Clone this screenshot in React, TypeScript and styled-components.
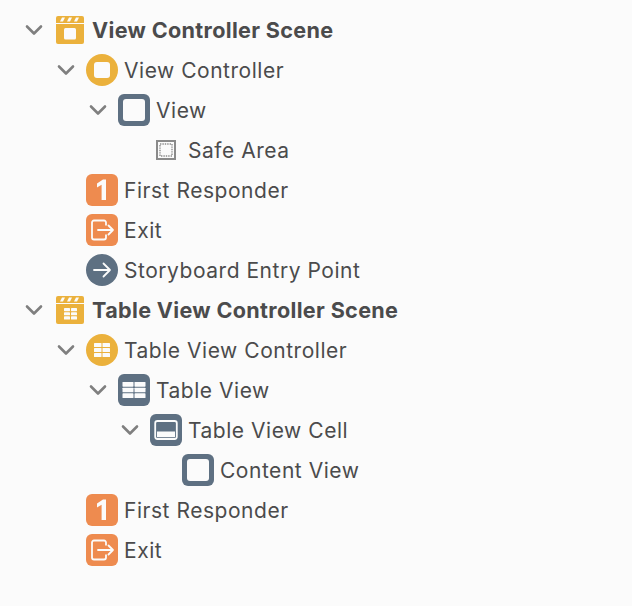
import React from "react";
import styled, { createGlobalStyle } from "styled-components";

const Global = createGlobalStyle`
  html, body { margin: 0; padding: 0; background: #fbfbfb; }
  body { width: 632px; height: 606px; overflow: hidden; }
`;

const Tree = styled.div`
  display: flex;
  flex-direction: column;
  padding: 10px 0 0 22px;
  font-family: Inter, "Liberation Sans", sans-serif;
  color: #4b4b4c;
`;

const Row = styled.div<{ $level: number }>`
  display: flex;
  align-items: center;
  height: 40px;
  padding-left: ${(p) => p.$level * 32}px;
`;

const ChevronSlot = styled.div`
  display: flex;
  align-items: center;
  justify-content: center;
  width: 24px;
  height: 40px;
  margin-right: 8px;
`;

const IconSlot = styled.div`
  display: flex;
  align-items: center;
  justify-content: center;
  width: 32px;
  height: 32px;
  margin-right: 6px;
`;

const Label = styled.span<{ $bold?: boolean }>`
  font-size: ${(p) => (p.$bold ? 21.6 : 21)}px;
  font-weight: ${(p) => (p.$bold ? 700 : 400)};
  letter-spacing: ${(p) => (p.$bold ? 0.33 : 0.53)}px;
  white-space: nowrap;
`;

const GOLD = "#ebb13c";
const SLATE = "#5e7082";
const ORANGE = "#ee8b4f";
const CARD = "#fbfbfb";

const Chevron = () => (
  <svg width="18" height="12" viewBox="0 0 18 12" fill="none">
    <path d="M2 2.5 L9 9.5 L16 2.5" stroke="#7f7f7f" strokeWidth="2.6" strokeLinecap="round" strokeLinejoin="round" />
  </svg>
);

const TableGlyph = ({ x, y, w, h, gap = 1 }: { x: number; y: number; w: number; h: number; gap?: number }) => {
  const ch = (h - 2 * gap) / 3;
  const cellW = (w - gap) / 2;
  const cells = [];
  for (let r = 0; r < 3; r++) {
    for (let c = 0; c < 2; c++) {
      cells.push(
        <rect key={`${r}-${c}`} x={x + c * (cellW + gap)} y={y + r * (ch + gap)} width={cellW} height={ch} rx="0.6" fill={CARD} />
      );
    }
  }
  return <>{cells}</>;
};

const Clapper = ({ children }: { children: React.ReactNode }) => (
  <svg width="28" height="28" viewBox="0 0 28 28">
    <path d="M2 0 H26 a2 2 0 0 1 2 2 V7 H0 V2 a2 2 0 0 1 2 -2 Z" fill={GOLD} />
    <path d="M4 5.6 L6 1.6 H9 L7 5.6 Z M11 5.6 L13 1.6 H16 L14 5.6 Z M18 5.6 L20 1.6 H23 L21 5.6 Z" fill={CARD} />
    <path d="M0 8 H28 V26 a2 2 0 0 1 -2 2 H2 a2 2 0 0 1 -2 -2 Z" fill={GOLD} />
    {children}
  </svg>
);

const SceneView = () => (
  <Clapper>
    <rect x="8" y="12" width="12" height="11.5" rx="1.5" fill={CARD} />
  </Clapper>
);

const SceneTable = () => (
  <Clapper>
    <TableGlyph x={8} y={12} w={13} h={11.5} />
  </Clapper>
);

const ControllerView = () => (
  <svg width="32" height="32" viewBox="0 0 32 32">
    <circle cx="16" cy="16" r="16" fill={GOLD} />
    <rect x="8" y="8" width="16" height="16" rx="3" fill={CARD} />
  </svg>
);

const ControllerTable = () => (
  <svg width="32" height="32" viewBox="0 0 32 32">
    <circle cx="16" cy="16" r="16" fill={GOLD} />
    <TableGlyph x={8} y={9} w={16} h={14} />
  </svg>
);

const ViewIcon = () => (
  <svg width="32" height="32" viewBox="0 0 32 32">
    <rect width="32" height="32" rx="6" fill={SLATE} />
    <rect x="5" y="5" width="22" height="22" rx="3" fill={CARD} />
  </svg>
);

const TableIcon = () => (
  <svg width="32" height="32" viewBox="0 0 32 32">
    <rect width="32" height="32" rx="6" fill={SLATE} />
    <TableGlyph x={4.5} y={8} w={23} h={16} />
  </svg>
);

const CellIcon = () => (
  <svg width="32" height="32" viewBox="0 0 32 32">
    <rect width="32" height="32" rx="6" fill={SLATE} />
    <rect x="5.2" y="7" width="21.6" height="18" rx="2.2" fill="none" stroke={CARD} strokeWidth="1.8" />
    <rect x="7" y="17.5" width="18" height="5.7" fill={CARD} />
  </svg>
);

const SafeAreaIcon = () => (
  <svg width="20" height="20" viewBox="0 0 20 20">
    <rect x="1" y="1" width="18" height="18" fill="#fbfbfb" stroke="#8a8a8a" strokeWidth="2" />
    <rect x="4" y="4" width="12" height="12" fill="none" stroke="#8c8c8c" strokeWidth="1.4" strokeDasharray="1.4 1" />
  </svg>
);

const ResponderIcon = () => (
  <svg width="32" height="32" viewBox="0 0 32 32">
    <rect width="32" height="32" rx="6" fill={ORANGE} />
    <path d="M11 9.5 L17 5.5 H20 V26 H15.6 V10.8 L11 13.4 Z" fill={CARD} />
  </svg>
);

const ExitIcon = () => (
  <svg width="32" height="32" viewBox="0 0 32 32" fill="none">
    <rect width="32" height="32" rx="6" fill={ORANGE} />
    <path d="M20 11.5 V8.5 a2 2 0 0 0 -2 -2 H8 a2 2 0 0 0 -2 2 V23.5 a2 2 0 0 0 2 2 H18 a2 2 0 0 0 2 -2 V20.5" stroke={CARD} strokeWidth="1.8" />
    <path d="M12 16 H27 M22.5 11.5 L27 16 L22.5 20.5" stroke={CARD} strokeWidth="1.8" strokeLinecap="round" strokeLinejoin="round" />
  </svg>
);

const EntryIcon = () => (
  <svg width="32" height="32" viewBox="0 0 32 32" fill="none">
    <circle cx="16" cy="16" r="16" fill={SLATE} />
    <path d="M8 16 H24 M17.5 9.5 L24 16 L17.5 22.5" stroke={CARD} strokeWidth="1.8" strokeLinecap="round" strokeLinejoin="round" />
  </svg>
);

type Item = { level: number; chevron?: boolean; icon: React.ReactNode; text: string; bold?: boolean };

const items: Item[] = [
  { level: 0, chevron: true, icon: <SceneView />, text: "View Controller Scene", bold: true },
  { level: 1, chevron: true, icon: <ControllerView />, text: "View Controller" },
  { level: 2, chevron: true, icon: <ViewIcon />, text: "View" },
  { level: 3, icon: <SafeAreaIcon />, text: "Safe Area" },
  { level: 1, icon: <ResponderIcon />, text: "First Responder" },
  { level: 1, icon: <ExitIcon />, text: "Exit" },
  { level: 1, icon: <EntryIcon />, text: "Storyboard Entry Point" },
  { level: 0, chevron: true, icon: <SceneTable />, text: "Table View Controller Scene", bold: true },
  { level: 1, chevron: true, icon: <ControllerTable />, text: "Table View Controller" },
  { level: 2, chevron: true, icon: <TableIcon />, text: "Table View" },
  { level: 3, chevron: true, icon: <CellIcon />, text: "Table View Cell" },
  { level: 4, icon: <ViewIcon />, text: "Content View" },
  { level: 1, icon: <ResponderIcon />, text: "First Responder" },
  { level: 1, icon: <ExitIcon />, text: "Exit" },
];

export default function App() {
  return (
    <>
      <Global />
      <Tree>
        {items.map((it, i) => (
          <Row key={i} $level={it.level}>
            <ChevronSlot>{it.chevron ? <Chevron /> : null}</ChevronSlot>
            <IconSlot>{it.icon}</IconSlot>
            <Label $bold={it.bold}>{it.text}</Label>
          </Row>
        ))}
      </Tree>
    </>
  );
}
